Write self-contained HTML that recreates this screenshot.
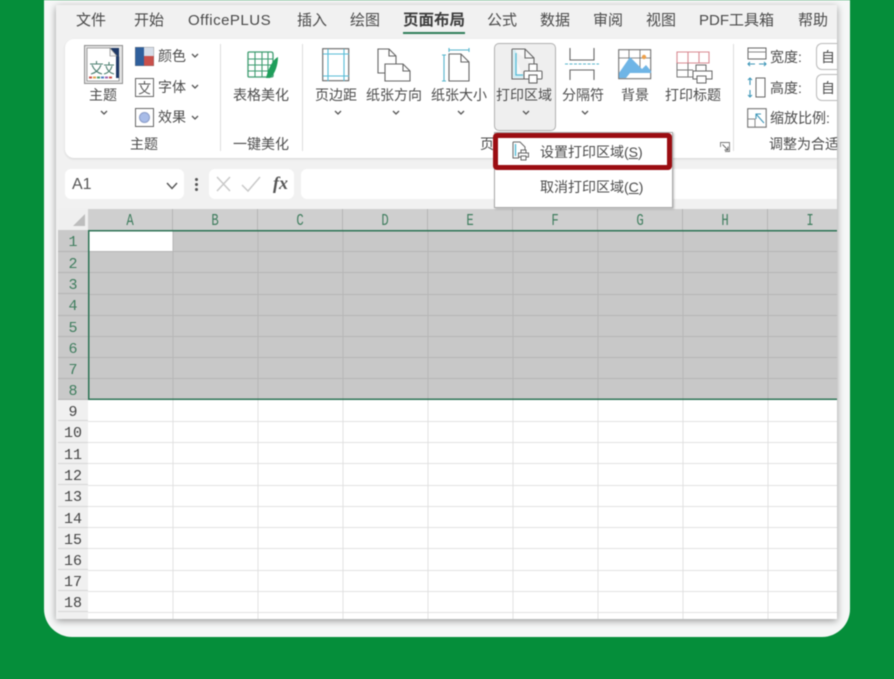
<!DOCTYPE html>
<html>
<head>
<meta charset="utf-8">
<style>
html,body{margin:0;padding:0;background:#058e3a;}
body{width:894px;height:679px;overflow:hidden;position:relative;font-family:"Liberation Sans","Noto Sans CJK SC",sans-serif;color:#444;}
#wrap{position:absolute;left:0;top:0;width:894px;height:679px;filter:blur(.5px);overflow:hidden;}
.card{position:absolute;left:44px;top:-40px;width:806px;height:677px;background:#f6f7f7;border-radius:28px;}
.win{position:absolute;left:56px;top:5px;width:781px;height:614px;background:#f1f1f1;overflow:hidden;box-shadow:0 2px 7px rgba(0,0,0,.38);}
.abs{position:absolute;}
.t{position:absolute;white-space:nowrap;line-height:1;}
.tab{position:absolute;top:13px;font-size:15px;line-height:1;white-space:nowrap;color:#4a4a4a;}
.rb{position:absolute;left:65px;top:39px;width:772px;height:119px;background:#fff;border-radius:9px 0 0 9px;box-shadow:0 1px 2px rgba(0,0,0,.12);}
.sm{font-size:14px;color:#4c4c4c;text-align:center;}
.sep{position:absolute;width:1px;background:#dcdcdc;top:44px;height:107px;}
.chev{position:absolute;width:8px;height:5px;}
.colh{position:absolute;top:209px;height:21px;background:#cfcfcf;border-right:1px solid #b5b5b5;box-sizing:border-box;text-align:center;font:17px/25px "Liberation Mono",monospace;color:#3f7d5e;}
.colh span{display:inline-block;transform:scaleX(.72);}
.rowh{position:absolute;left:58px;width:30px;box-sizing:border-box;text-align:center;font:15px/25px "Liberation Mono",monospace;border-bottom:1px solid #d6d6d6;background:#f0f0f0;color:#444;}
.rowh.s{background:#c9c9c9;color:#3f7d5e;border-bottom-color:#b5b5b5;}
</style>
</head>
<body>
<div id="wrap">
<div class="card"></div>
<div class="win"></div>

<!-- tabs -->
<div class="tab" style="left:76px">文件</div>
<div class="tab" style="left:134px">开始</div>
<div class="tab" style="left:188px;letter-spacing:.5px">OfficePLUS</div>
<div class="tab" style="left:297px">插入</div>
<div class="tab" style="left:350px">绘图</div>
<div class="tab" style="left:403px;font-weight:bold;color:#3c3c3c;font-size:15.5px">页面布局</div>
<div class="abs" style="left:403px;top:32px;width:62px;height:2px;background:#2f7d59"></div>
<div class="tab" style="left:487px">公式</div>
<div class="tab" style="left:540px">数据</div>
<div class="tab" style="left:593px">审阅</div>
<div class="tab" style="left:646px">视图</div>
<div class="tab" style="left:699px">PDF工具箱</div>
<div class="tab" style="left:798px">帮助</div>

<!-- ribbon -->
<div class="rb"></div>
<div class="sep" style="left:220px"></div>
<div class="sep" style="left:302px"></div>
<div class="sep" style="left:733px"></div>

<!-- theme group -->
<svg class="abs" style="left:84px;top:45px" width="39" height="39" viewBox="0 0 39 39">
<rect x=".5" y=".5" width="38" height="38" fill="#e4e4e4" stroke="#8f8f8f"/>
<path d="M3 3H26L35 12V36H3Z" fill="#fff" stroke="#8a8a8a" stroke-width=".8"/>
<path d="M27 3H35V33L32 33V11H27Z" fill="#1f3a68"/>
<path d="M26 3V11H33Z" fill="#f3f3f3" stroke="#777" stroke-width=".6"/>
<path d="M6 19H19M12.5 16V19M8 20C10 25 14 28 18 29M17 20C15 25 11 28 7 29M20 20H30M25 17V20M22 21C23 25 26 28 30 29M28 21C27 25 24 28 20 29" stroke="#4c7f70" stroke-width="1.1" fill="none"/>
<path d="M5 31.5h3v2H5z" fill="#c9504b"/><path d="M9 31.5h3v2H9z" fill="#e0a24a"/><path d="M13 31.5h3v2h-3z" fill="#4c9c6e"/><path d="M17 31.5h3v2h-3z" fill="#4f7cc0"/><path d="M21 31.5h3v2h-3z" fill="#a064b0"/><path d="M25 31.5h3v2h-3z" fill="#c9504b"/>
</svg>
<div class="t sm" style="left:89px;top:88px">主题</div>
<svg class="chev" style="left:100px;top:110px" viewBox="0 0 8 5"><path d="M1 1L4 4L7 1" fill="none" stroke="#555" stroke-width="1.3"/></svg>

<svg class="abs" style="left:135px;top:47px" width="19" height="19" viewBox="0 0 19 19"><rect width="10" height="19" fill="#2f5f9c"/><rect x="9" width="10" height="9" fill="#d6dde8"/><rect x="9" y="9" width="10" height="10" fill="#c9504b"/><rect x="0" width="19" height="19" fill="none" stroke="#777" stroke-width=".7"/></svg>
<div class="t sm" style="left:158px;top:49px">颜色</div>
<svg class="chev" style="left:191px;top:53px" viewBox="0 0 8 5"><path d="M1 1L4 4L7 1" fill="none" stroke="#555" stroke-width="1.3"/></svg>

<svg class="abs" style="left:135px;top:78px" width="19" height="19" viewBox="0 0 19 19"><rect x=".5" y=".5" width="18" height="18" fill="#fff" stroke="#666"/><path d="M3.5 6H15.5M9.5 3V6M5.5 7C7 12 11 15 15 16M13.5 7C12 12 8 15 4 16" stroke="#555" stroke-width="1.1" fill="none"/></svg>
<div class="t sm" style="left:158px;top:80px">字体</div>
<svg class="chev" style="left:191px;top:84px" viewBox="0 0 8 5"><path d="M1 1L4 4L7 1" fill="none" stroke="#555" stroke-width="1.3"/></svg>

<svg class="abs" style="left:135px;top:108px" width="19" height="19" viewBox="0 0 19 19"><rect x=".5" y=".5" width="18" height="18" fill="#fff" stroke="#666"/><circle cx="9.5" cy="9.5" r="5" fill="#a8bce8" stroke="#8a9cc8"/></svg>
<div class="t sm" style="left:158px;top:110px">效果</div>
<svg class="chev" style="left:191px;top:115px" viewBox="0 0 8 5"><path d="M1 1L4 4L7 1" fill="none" stroke="#555" stroke-width="1.3"/></svg>
<div class="t sm" style="left:130px;top:137px">主题</div>

<!-- one-click -->
<svg class="abs" style="left:246px;top:50px" width="34" height="30" viewBox="0 0 34 30">
<path d="M2 3Q2 2 3 2H25Q27 2 27 4V26Q27 27 25 27H3Q2 27 2 26Z" fill="#fff" stroke="#3e9c70" stroke-width="1.3"/>
<path d="M2 9H27M2 15H27M2 21H27M9 2V27M16 2V27M22 2V27" stroke="#3e9c70" stroke-width="1.1"/>
<path d="M20 28C22 20 26 10 32 7C32 15 29 24 24 28Z" fill="#1f9e5b"/>
</svg>
<div class="t sm" style="left:233px;top:88px">表格美化</div>
<div class="t sm" style="left:233px;top:137px">一键美化</div>

<!-- page setup group -->
<div class="abs" style="left:494px;top:43px;width:62px;height:88px;background:#efefef;border:1px solid #b0b0b0;border-radius:5px;box-sizing:border-box"></div>

<svg class="abs" style="left:322px;top:48px" width="28" height="34" viewBox="0 0 28 34"><rect x=".7" y=".7" width="26" height="32" fill="#fff" stroke="#666" stroke-width="1.1"/><path d="M6 1V33M22 1V33M1 6H27M1 28H27" stroke="#57bcd6" stroke-width="1.1"/></svg>
<div class="t sm" style="left:315px;top:88px">页边距</div>
<svg class="chev" style="left:334px;top:110px" viewBox="0 0 8 5"><path d="M1 1L4 4L7 1" fill="none" stroke="#555" stroke-width="1.3"/></svg>

<svg class="abs" style="left:377px;top:48px" width="36" height="34" viewBox="0 0 36 34" fill="#fff" stroke="#666" stroke-width="1.1"><path d="M1 1H12L19 8V25H1Z"/><path d="M12 1V8H19" fill="none"/><path d="M8 16H26L33 23V33H8Z"/><path d="M26 16V23H33" fill="none"/></svg>
<div class="t sm" style="left:366px;top:88px">纸张方向</div>
<svg class="chev" style="left:392px;top:110px" viewBox="0 0 8 5"><path d="M1 1L4 4L7 1" fill="none" stroke="#555" stroke-width="1.3"/></svg>

<svg class="abs" style="left:442px;top:47px" width="29" height="36" viewBox="0 0 29 36" fill="none"><path d="M7 3H27M7 1V5M27 1V5M2 8V34M0 8H4M0 34H4" stroke="#57b5cc" stroke-width="1.1"/><path d="M7 7H19L27 15V34H7Z" fill="#fff" stroke="#666" stroke-width="1.1"/><path d="M19 7V15H27" stroke="#666" stroke-width="1.1"/></svg>
<div class="t sm" style="left:431px;top:88px">纸张大小</div>
<svg class="chev" style="left:457px;top:110px" viewBox="0 0 8 5"><path d="M1 1L4 4L7 1" fill="none" stroke="#555" stroke-width="1.3"/></svg>

<svg class="abs" style="left:510px;top:48px" width="34" height="36" viewBox="0 0 34 36" fill="none"><path d="M2 1H15L24 10V17M2 1V31H14" fill="#f7f7f7" stroke="#666" stroke-width="1.1"/><path d="M3 2H6V27H13V30H3Z" fill="#d5eef4"/><path d="M15 1V10H24" stroke="#666" stroke-width="1.1"/><path d="M6 5V27H13" stroke="#57bcd6" stroke-width="1.3"/><path d="M19 16H27V23H19Z" fill="#fff" stroke="#666" stroke-width="1.1"/><rect x="14" y="23" width="18" height="8" rx="1" fill="#fff" stroke="#666" stroke-width="1.1"/><rect x="19" y="27" width="8" height="8" fill="#fff" stroke="#666" stroke-width="1.1"/></svg>
<div class="t sm" style="left:496px;top:88px">打印区域</div>
<svg class="chev" style="left:522px;top:110px" viewBox="0 0 8 5"><path d="M1 1L4 4L7 1" fill="none" stroke="#555" stroke-width="1.3"/></svg>

<svg class="abs" style="left:564px;top:48px" width="36" height="33" viewBox="0 0 36 33" fill="none"><path d="M6 0V12H30V0M6 32V22H30V32" stroke="#666" stroke-width="1.1"/><path d="M1 16H35" stroke="#57b5cc" stroke-width="1.1" stroke-dasharray="3 1.5"/></svg>
<div class="t sm" style="left:562px;top:88px">分隔符</div>
<svg class="chev" style="left:581px;top:110px" viewBox="0 0 8 5"><path d="M1 1L4 4L7 1" fill="none" stroke="#555" stroke-width="1.3"/></svg>

<svg class="abs" style="left:618px;top:49px" width="34" height="31" viewBox="0 0 34 31" fill="none"><rect x=".7" y=".7" width="32" height="29" fill="#fff" stroke="#666"/><path d="M1 9H33M11 1V20M22 1V20" stroke="#666" stroke-width=".8"/><path d="M1 24L12 8L24 20L28 16L33 22V24H12L8 29H1Z" fill="#6fb5e6"/><circle cx="26" cy="8" r="2.2" fill="#eda04a"/></svg>
<div class="t sm" style="left:621px;top:88px">背景</div>

<svg class="abs" style="left:676px;top:51px" width="37" height="33" viewBox="0 0 37 33" fill="none"><path d="M1 1H33V12H1ZM12 1V12M23 1V12" stroke="#d98a92" stroke-width="1.1"/><path d="M1 12V26H17M1 19H17M12 12V26" stroke="#777" stroke-width="1"/><path d="M20 14H30V20H20Z" fill="#fff" stroke="#666"/><rect x="17" y="20" width="19" height="8" fill="#fff" stroke="#666"/><rect x="21" y="25" width="9" height="7" fill="#fff" stroke="#666"/></svg>
<div class="t sm" style="left:665px;top:88px">打印标题</div>

<div class="t sm" style="left:480px;top:137px">页</div>
<svg class="abs" style="left:720px;top:142px" width="10" height="10" viewBox="0 0 10 10" fill="none"><path d="M.5 5V.5H9.5V9.5H5" stroke="#777" stroke-width=".9"/><path d="M2.5 2.5L8 8M8 4.5V8H4.5" stroke="#666" stroke-width=".9"/></svg>

<!-- scale group -->
<svg class="abs" style="left:747px;top:47px" width="20" height="20" viewBox="0 0 20 20" fill="none"><rect x="1" y="1" width="18" height="11" stroke="#666"/><path d="M1 5H19" stroke="#888"/><path d="M1 17H8M12 17H19M3 15L1 17L3 19M17 15L19 17L17 19" stroke="#3f97b8" stroke-width="1.1"/></svg>
<div class="t sm" style="left:770px;top:50px">宽度:</div>
<svg class="abs" style="left:747px;top:77px" width="20" height="21" viewBox="0 0 20 21" fill="none"><rect x="9" y="1" width="9" height="19" stroke="#666"/><path d="M3 1V8M3 13V20M1 3L3 1L5 3M1 18L3 20L5 18" stroke="#3f97b8" stroke-width="1.1"/></svg>
<div class="t sm" style="left:770px;top:81px">高度:</div>
<div class="abs" style="left:816px;top:43px;width:21px;height:27px;border:1px solid #bbb;border-right:0;border-radius:6px 0 0 6px;box-sizing:border-box;background:#fff"></div>
<div class="t sm" style="left:821px;top:50px;width:16px;overflow:hidden;text-align:left">自</div>
<div class="abs" style="left:816px;top:74px;width:21px;height:27px;border:1px solid #bbb;border-right:0;border-radius:6px 0 0 6px;box-sizing:border-box;background:#fff"></div>
<div class="t sm" style="left:821px;top:81px;width:16px;overflow:hidden;text-align:left">自</div>
<svg class="abs" style="left:747px;top:108px" width="20" height="20" viewBox="0 0 20 20" fill="none"><rect x=".7" y=".7" width="18.5" height="18.5" fill="#fff" stroke="#666"/><path d="M1 11H8V19" stroke="#888"/><path d="M17 15L9 6M9 11V6H14" stroke="#3f97b8" stroke-width="1.1"/></svg>
<div class="t sm" style="left:770px;top:111px;font-size:14px">缩放比例:</div>
<div class="t sm" style="left:769px;top:137px;width:68px;overflow:hidden;text-align:left">调整为合适</div>

<!-- formula bar -->
<div class="abs" style="left:65px;top:169px;width:119px;height:30px;background:#fff;border-radius:6px"></div>
<div class="t" style="left:72px;top:177px;font-size:16px;color:#555">A1</div>
<svg class="abs" style="left:166px;top:182px" width="12" height="8" viewBox="0 0 12 8"><path d="M1 1L6 6.5L11 1" fill="none" stroke="#555" stroke-width="1.4"/></svg>
<div class="abs" style="left:195px;top:178px;width:3px;height:3px;background:#555;border-radius:50%;box-shadow:0 5px 0 #555,0 10px 0 #555"></div>
<div class="abs" style="left:209px;top:169px;width:85px;height:30px;background:#fff;border-radius:6px"></div>
<svg class="abs" style="left:215px;top:175px" width="48" height="18" viewBox="0 0 48 18" fill="none"><path d="M2 2L15 16M15 2L2 16" stroke="#c9c9c9" stroke-width="1.5"/><path d="M27 10L33 16L45 2" stroke="#c9c9c9" stroke-width="1.5"/></svg>
<div class="t" style="left:273px;top:174px;font:italic bold 18px/1 'Liberation Serif',serif;color:#555">fx</div>
<div class="abs" style="left:301px;top:169px;width:536px;height:30px;background:#fff;border-radius:6px 0 0 6px"></div>

<!-- sheet -->
<div class="abs" style="left:58px;top:209px;width:779px;height:410px;background:#fff"></div>
<div class="abs" style="left:58px;top:209px;width:30px;height:21px;background:#efefef"></div>
<svg class="abs" style="left:73px;top:214px" width="12" height="12" viewBox="0 0 12 12"><path d="M12 0V12H0Z" fill="#bdbdbd"/></svg>

<div class="colh" style="left:88px;width:85px"><span>A</span></div>
<div class="colh" style="left:173px;width:85px"><span>B</span></div>
<div class="colh" style="left:258px;width:85px"><span>C</span></div>
<div class="colh" style="left:343px;width:85px"><span>D</span></div>
<div class="colh" style="left:428px;width:85px"><span>E</span></div>
<div class="colh" style="left:513px;width:85px"><span>F</span></div>
<div class="colh" style="left:598px;width:85px"><span>G</span></div>
<div class="colh" style="left:683px;width:85px"><span>H</span></div>
<div class="colh" style="left:768px;width:69px;padding-left:16px;border-right:0"><span>I</span></div>

<!-- grid -->
<svg class="abs" style="left:88px;top:230px" width="749" height="389" viewBox="0 0 749 389">
<rect x="0" y="0" width="749" height="170" fill="#c8c8c8"/>
<rect x="1" y="1" width="84" height="20" fill="#fff"/>
<g stroke="#b6b6b6" stroke-width="1">
<path d="M85 0V170M170 0V170M255 0V170M340 0V170M425 0V170M510 0V170M595 0V170M680 0V170"/>
<path d="M0 21.5H749M0 42.5H749M0 64.5H749M0 85.5H749M0 106.5H749M0 127.5H749M0 148.5H749"/>
</g>
<g stroke="#e2e2e2" stroke-width="1">
<path d="M85 170V389M170 170V389M255 170V389M340 170V389M425 170V389M510 170V389M595 170V389M680 170V389"/>
<path d="M0 191.5H749M0 212.5H749M0 233.5H749M0 255.5H749M0 276.5H749M0 297.5H749M0 318.5H749M0 340.5H749M0 361.5H749M0 382.5H749"/>
</g>
<rect x=".75" y=".75" width="760" height="168.5" fill="none" stroke="#2d7355" stroke-width="1.5"/>
</svg>

<!-- row headers -->
<div class="rowh s" style="top:230px;height:22px">1</div>
<div class="rowh s" style="top:252px;height:21px">2</div>
<div class="rowh s" style="top:273px;height:21px">3</div>
<div class="rowh s" style="top:294px;height:22px">4</div>
<div class="rowh s" style="top:316px;height:21px">5</div>
<div class="rowh s" style="top:337px;height:21px">6</div>
<div class="rowh s" style="top:358px;height:21px">7</div>
<div class="rowh s" style="top:379px;height:21px">8</div>
<div class="rowh" style="top:400px;height:21px">9</div>
<div class="rowh" style="top:421px;height:22px">10</div>
<div class="rowh" style="top:443px;height:21px">11</div>
<div class="rowh" style="top:464px;height:21px">12</div>
<div class="rowh" style="top:485px;height:22px">13</div>
<div class="rowh" style="top:507px;height:21px">14</div>
<div class="rowh" style="top:528px;height:21px">15</div>
<div class="rowh" style="top:549px;height:21px">16</div>
<div class="rowh" style="top:570px;height:21px">17</div>
<div class="rowh" style="top:591px;height:21px">18</div>
<div class="abs" style="left:58px;top:612px;width:30px;height:7px;background:#f0f0f0"></div>

<!-- dropdown menu -->
<div class="abs" style="left:494px;top:132px;width:179px;height:76px;background:#fff;border:1px solid #a8a8a8;box-sizing:border-box;box-shadow:1px 1px 2px rgba(0,0,0,.25)"></div>
<div class="abs" style="left:493px;top:133px;width:179px;height:37px;border:5px solid #9b0d12;border-radius:4px;box-sizing:border-box;background:#fff"></div>
<svg class="abs" style="left:512px;top:141px" width="18" height="20" viewBox="0 0 18 20" fill="none"><path d="M1 1H8L13 6V9M1 1V17H7" stroke="#666"/><path d="M3.5 3V15" stroke="#57bcd6" stroke-width="1.4"/><rect x="9" y="9" width="5" height="3" stroke="#666" fill="#fff"/><rect x="6.5" y="12" width="10" height="4" stroke="#666" fill="#fff"/><rect x="9" y="15" width="5" height="4" stroke="#666" fill="#fff"/></svg>
<div class="t sm" style="left:540px;top:145px;text-align:left">设置打印区域(<u>S</u>)</div>
<div class="t sm" style="left:540px;top:180px;text-align:left">取消打印区域(<u>C</u>)</div>

</div>
</body>
</html>
